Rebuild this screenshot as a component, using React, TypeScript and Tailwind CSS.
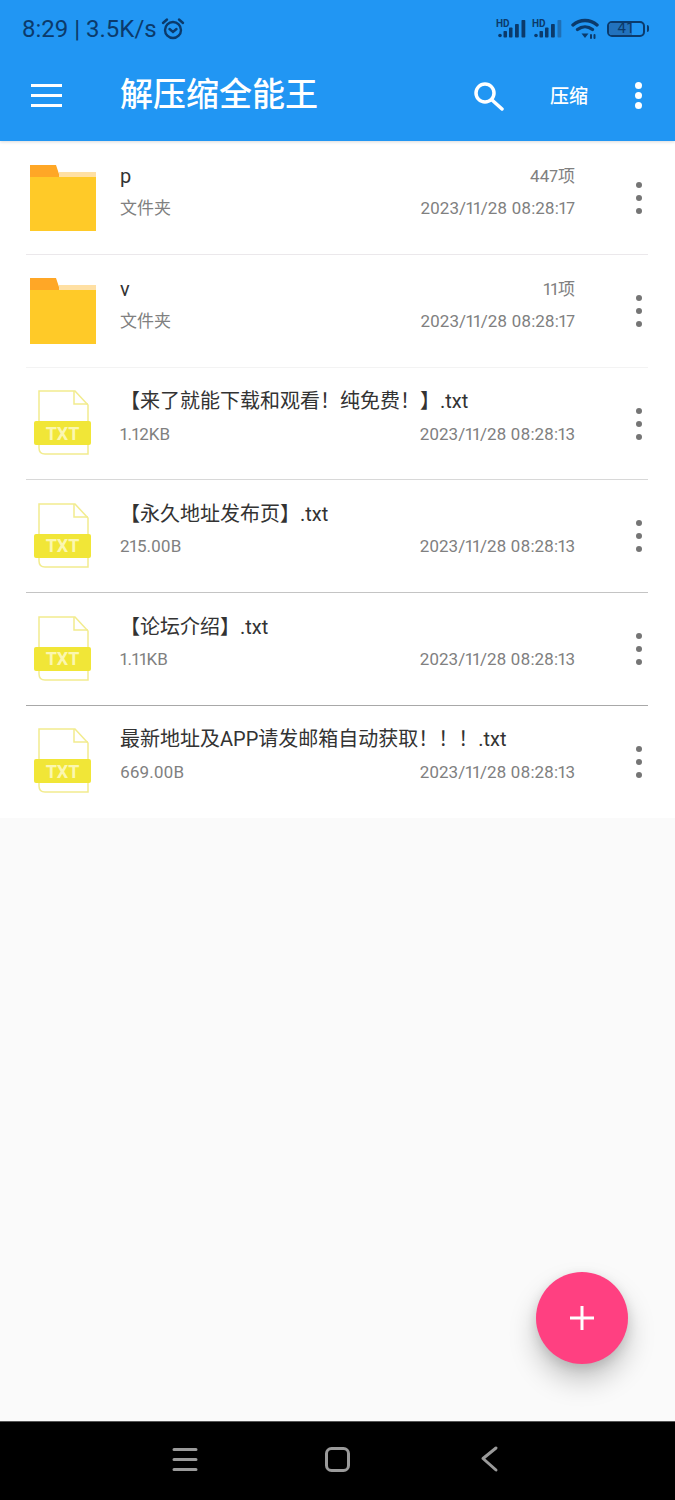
const FONT = "font-['Roboto','Noto_Sans_CJK_SC',sans-serif]";

type Row = {
  name: string;
  sub: string;
  extra?: string;
  date: string;
  folder?: boolean;
  height: string;
  divider: string;
};

const rows: Row[] = [
  { name: "p", sub: "文件夹", extra: "447项", date: "2023/11/28 08:28:17", folder: true, height: "h-[113px]", divider: "border-[#ebe8eb]" },
  { name: "v", sub: "文件夹", extra: "11项", date: "2023/11/28 08:28:17", folder: true, height: "h-[113px]", divider: "border-[#f3f3f3]" },
  { name: "【来了就能下载和观看！纯免费！】.txt", sub: "1.12KB", date: "2023/11/28 08:28:13", height: "h-[112px]", divider: "border-[#d8d8d8]" },
  { name: "【永久地址发布页】.txt", sub: "215.00B", date: "2023/11/28 08:28:13", height: "h-[113px]", divider: "border-[#c4c4c4]" },
  { name: "【论坛介绍】.txt", sub: "1.11KB", date: "2023/11/28 08:28:13", height: "h-[113px]", divider: "border-[#a8a8a8]" },
  { name: "最新地址及APP请发邮箱自动获取！！！.txt", sub: "669.00B", date: "2023/11/28 08:28:13", height: "h-[112px]", divider: "border-transparent" },
];

function FolderIcon() {
  return (
    <svg width="68" height="68" viewBox="0 0 68 68" className="shrink-0">
      <path d="M0 0H26L30 12H0Z" fill="#ffa726" />
      <rect x="29" y="7" width="37" height="6" fill="#ffe0a3" />
      <rect x="0" y="12" width="66" height="54" fill="#ffca28" />
    </svg>
  );
}

function TxtIcon() {
  return (
    <div className="relative w-[68px] h-[68px] shrink-0">
      <svg width="68" height="68" viewBox="0 0 68 68" className="absolute inset-0">
        <path d="M9 1H45L58 15V64H15Q9 64 9 58Z" fill="none" stroke="#f2ec8e" strokeWidth="1.5" />
        <path d="M44 1V14H58" fill="none" stroke="#f2ec8e" strokeWidth="1.5" />
        <rect x="4" y="31" width="57" height="24" rx="2" fill="#f1e637" />
      </svg>
      <span className="absolute left-[4px] top-[31px] w-[57px] h-[24px] flex items-center justify-center text-[18px] font-bold text-[#fbf7b0]">
        TXT
      </span>
    </div>
  );
}

function Dots({ color, size, gap }: { color: string; size: string; gap: string }) {
  return (
    <div className={`flex flex-col ${gap}`}>
      <span className={`${size} rounded-full ${color}`} />
      <span className={`${size} rounded-full ${color}`} />
      <span className={`${size} rounded-full ${color}`} />
    </div>
  );
}

function Signal({ dim }: { dim?: boolean }) {
  return (
    <div className="relative w-[30px] h-[20px]">
      <span className="absolute left-[-1px] top-0 text-[10px] leading-[9px] font-bold text-[#0b3a6b]">HD</span>
      <svg width="30" height="20" viewBox="0 0 30 20" className="absolute inset-0">
        <circle cx="3" cy="16.500" r="1.800" fill="#0b3a6b" />
        <rect x="6.500" y="12" width="3.500" height="6.500" rx="0.800" fill="#0b3a6b" />
        <rect x="12" y="8.500" width="3.500" height="10" rx="0.800" fill="#0b3a6b" />
        <rect x="18" y="5" width="3.800" height="13.500" rx="0.800" fill="#0b3a6b" />
        <rect x="24.500" y="1" width="3.800" height="17.500" rx="0.800" fill={dim ? "#1f6fb5" : "#0b3a6b"} />
      </svg>
    </div>
  );
}

function StatusBar() {
  return (
    <div className="h-[57px] pl-[22px] pr-[26px] flex items-center justify-between text-[#0b3a6b]">
      <div className="flex items-center text-[24px] leading-none">
        <span>8:29 | 3.5K/s</span>
        <svg width="24" height="24" viewBox="0 0 24 24" fill="none" stroke="#0b3a6b" strokeWidth="2.4" strokeLinecap="round" className="ml-[4px]">
          <circle cx="12" cy="13" r="8" />
          <path d="M8.500 12L12 15L15.500 12" />
          <path d="M2 6L6 2.500M22 6L18 2.500" />
        </svg>
      </div>
      <div className="flex items-center">
        <Signal />
        <div className="w-[6px]" />
        <Signal dim />
        <svg width="28" height="22" viewBox="0 0 28 22" fill="none" stroke="#0b3a6b" strokeWidth="3.400" strokeLinecap="round" className="ml-[8px]">
          <path d="M2 7C9 1 19 1 26 7" />
          <path d="M6.500 11.500C11 8 17 8 21.500 11.500" />
          <path d="M10.500 15.500H17.500L14 20Z" fill="#0b3a6b" stroke="none" />
          <path d="M20 17V20M23.500 17V20" strokeWidth="2" />
        </svg>
        <div className="ml-[8px] w-[38px] h-[16px] border-2 border-[#0b3a6b] rounded-[5px] overflow-hidden relative flex items-center justify-center">
          <span className="absolute left-0 top-0 bottom-0 w-[68%] bg-[#2272bd]" />
          <span className="relative text-[15px] leading-none text-[#0b3a6b]">41</span>
        </div>
        <span className="ml-[2px] w-[2px] h-[7px] bg-[#0b3a6b] rounded-r" />
      </div>
    </div>
  );
}

function AppBar() {
  return (
    <div className="h-[84px] flex items-center pb-[9px] text-white">
      <svg width="32" height="24" viewBox="0 0 32 24" fill="white" className="ml-[31px]">
        <rect x="0" y="1" width="31" height="3" />
        <rect x="0" y="11" width="31" height="3" />
        <rect x="0" y="21" width="31" height="3" />
      </svg>
      <span className="ml-[57px] text-[33px] leading-none font-medium">解压缩全能王</span>
      <svg width="32" height="30" viewBox="0 0 32 30" fill="none" stroke="white" strokeWidth="3.500" strokeLinecap="round" className="ml-auto relative top-[1px]">
        <circle cx="12" cy="12" r="9" />
        <path d="M19 19L29 28" />
      </svg>
      <span className="ml-[45px] text-[19px] leading-none font-medium relative top-[2px]">压缩</span>
      <div className="ml-[47px] mr-[33px] relative top-[1px]">
        <Dots color="bg-white" size="w-[7px] h-[7px]" gap="gap-[3px]" />
      </div>
    </div>
  );
}

function FileRow({ row }: { row: Row }) {
  return (
    <div className={`${row.height} ml-[26px] mr-[27px] border-b ${row.divider} flex items-center`}>
      <div className="ml-[4px] mt-[1px]">{row.folder ? <FolderIcon /> : <TxtIcon />}</div>
      <div className="ml-[22px] flex-1 min-w-0 pr-[61px] flex flex-col gap-[11px] relative top-[-6px] proportional-nums">
        <div className="flex items-center justify-between h-[22px]">
          <span className="text-[20px] leading-none text-[#333333] whitespace-nowrap">{row.name}</span>
          {row.extra && <span className="text-[17px] leading-none text-[#808080] relative top-[1px]">{row.extra}</span>}
        </div>
        <div className="flex items-center justify-between h-[22px]">
          <span className="text-[17px] leading-none text-[#808080]">{row.sub}</span>
          <span className="text-[17px] leading-none text-[#808080] whitespace-nowrap">{row.date}</span>
        </div>
      </div>
      <div className="mr-[6px]">
        <Dots color="bg-[#757575]" size="w-[6px] h-[6px]" gap="gap-[7px]" />
      </div>
    </div>
  );
}

function NavBar() {
  return (
    <div className="h-[79px] bg-black flex items-center border-t border-[#555555] pb-[2px]">
      <svg width="370" height="40" viewBox="0 0 370 40" fill="none" stroke="#9a9a9a" strokeWidth="3" strokeLinecap="round" strokeLinejoin="round" className="ml-[150px]">
        <path d="M24 9.500H46M24 19.500H46M24 29.500H46" />
        <rect x="176.500" y="8.500" width="22" height="22" rx="5" />
        <path d="M346 8L333 18.500L346 30" />
      </svg>
    </div>
  );
}

export default function App() {
  return (
    <div className={`w-[675px] h-[1500px] flex flex-col bg-[#fafafa] overflow-hidden relative ${FONT}`}>
      <div className="h-[141px] bg-[#2196f3] shadow-[0_1px_3px_rgba(0,0,0,0.15)] relative z-10 shrink-0">
        <StatusBar />
        <AppBar />
      </div>

      <div className="bg-white shrink-0 pt-[1px]">
        {rows.map((row) => (
          <FileRow key={row.name} row={row} />
        ))}
      </div>

      <div className="flex-1" />

      {/* Floating add button */}
      <div className="absolute left-[536px] top-[1272px] w-[92px] h-[92px] rounded-full bg-[#ff4081] shadow-[0_16px_28px_rgba(0,0,0,0.22),0_4px_12px_rgba(0,0,0,0.12)] flex items-center justify-center">
        <svg width="24" height="24" viewBox="0 0 24 24" fill="white">
          <rect x="0" y="10.500" width="24" height="3" />
          <rect x="10.500" y="0" width="3" height="24" />
        </svg>
      </div>

      <NavBar />
    </div>
  );
}
